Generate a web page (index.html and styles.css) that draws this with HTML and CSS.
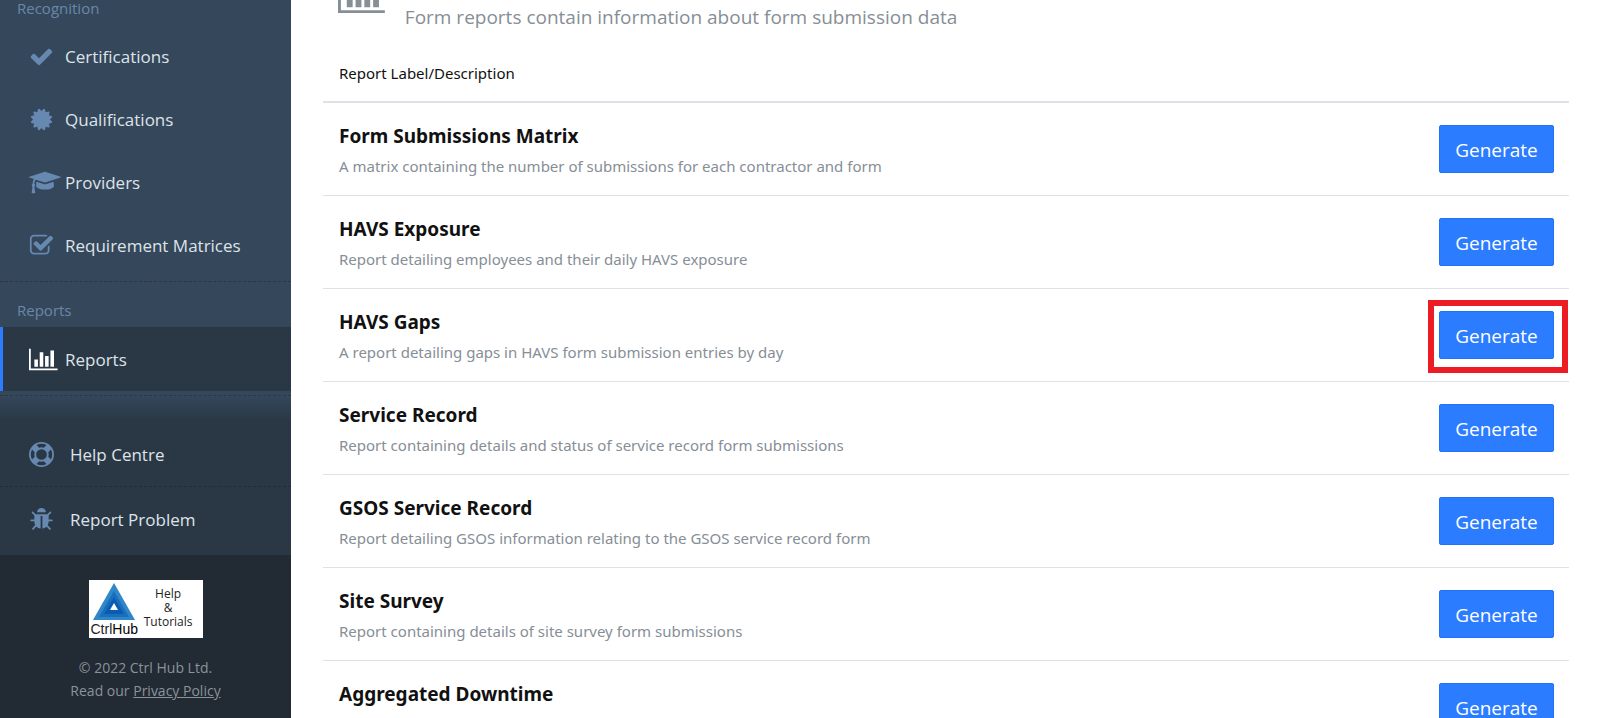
FILE: index.html
```
<!DOCTYPE html>
<html lang="en">
<head>
  <meta charset="UTF-8">
  <meta name="viewport" content="width=device-width, initial-scale=1.0">
  <title>Form Reports - Ctrl Hub</title>
  <link rel="stylesheet" href="styles.css">
</head>
<body>
  <div class="app">
    <aside class="sidebar">
      <nav class="menu">
        <div class="menu-title">Recognition</div>
        <a class="menu-item" href="#">
          <svg class="icon" viewBox="0 0 1792 1792" preserveAspectRatio="xMinYMid"><path d="M1671 566q0 40-28 68l-724 724-136 136q-28 28-68 28t-68-28l-136-136-362-362q-28-28-28-68t28-68l136-136q28-28 68-28t68 28l294 295 656-657q28-28 68-28t68 28l136 136q28 28 28 68z"/></svg>
          <span>Certifications</span>
        </a>
        <a class="menu-item" href="#">
          <svg class="icon" viewBox="0 0 1792 1792" preserveAspectRatio="xMinYMid"><path d="M1504 896l138 135q30 28 20 70-12 41-52 51l-188 48 53 186q12 41-19 70-29 31-70 19l-186-53-48 188q-10 40-51 52-12 2-19 2-31 0-51-22l-135-138-135 138q-28 30-70 20-41-11-51-52l-48-188-186 53q-41 12-70-19-31-29-19-70l53-186-188-48q-40-10-52-51-10-42 20-70l138-135-138-135q-30-28-20-70 12-41 52-51l188-48-53-186q-12-41 19-70 29-31 70-19l186 53 48-188q10-41 51-51 41-12 70 19l135 139 135-139q29-30 70-19 41 10 51 51l48 188 186-53q41-12 70 19 31 29 19 70l-53 186 188 48q40 10 52 51 10 42-20 70z"/></svg>
          <span>Qualifications</span>
        </a>
        <a class="menu-item" href="#">
          <svg class="icon" viewBox="0 0 2304 1792" preserveAspectRatio="xMinYMid"><path d="M1774 836l18 316q4 69-82 128t-235 93.5-323 34.5-323-34.5-235-93.5-82-128l18-316 574 181q22 7 48 7t48-7zm530-324q0 23-22 31l-1120 352q-4 1-10 1t-10-1l-652-206q-43 34-71 111.5t-34 178.5q63 36 63 109 0 69-58 107l58 433q2 14-8 25-9 11-24 11h-192q-15 0-24-11-10-11-8-25l58-433q-58-38-58-107 0-73 65-111 11-207 98-330l-333-104q-22-8-22-31t22-31l1120-352q4-1 10-1t10 1l1120 352q22 8 22 31z"/></svg>
          <span>Providers</span>
        </a>
        <a class="menu-item" href="#">
          <svg class="icon" viewBox="0 0 1792 1792" preserveAspectRatio="xMinYMid"><path d="M1472 930v318q0 119-84.5 203.5t-203.5 84.5h-832q-119 0-203.5-84.5t-84.5-203.5v-832q0-119 84.5-203.5t203.5-84.5h832q63 0 117 25 15 7 18 23 3 17-9 29l-49 49q-10 10-23 10-3 0-9-2-23-6-45-6h-832q-66 0-113 47t-47 113v832q0 66 47 113t113 47h832q66 0 113-47t47-113v-254q0-13 9-22l64-64q10-10 23-10 6 0 12 3 20 8 20 29zm231-489l-814 814q-24 24-57 24t-57-24l-430-430q-24-24-24-57t24-57l110-110q24-24 57-24t57 24l263 263 647-647q24-24 57-24t57 24l110 110q24 24 24 57t-24 57z"/></svg>
          <span>Requirement Matrices</span>
        </a>
      </nav>

      <nav class="menu">
        <div class="menu-title">Reports</div>
        <a class="menu-item active" href="#">
          <svg class="icon" viewBox="0 0 2048 1792" preserveAspectRatio="xMinYMid"><path d="M640 896v512h-256v-512h256zm384-512v1024h-256v-1024h256zm1024 1152v128h-2048v-1536h128v1408h1920zm-640-896v768h-256v-768h256zm384-384v1152h-256v-1152h256z"/></svg>
          <span>Reports</span>
        </a>
      </nav>

      <div class="support">
        <a class="support-item" href="#">
          <svg class="icon" viewBox="0 0 1792 1792">
            <path fill-rule="evenodd" d="M896 0a896 896 0 1 0 0 1792a896 896 0 1 0 0-1792zM896 128q190 0 361 90l-194 194q-82-28-167-28t-167 28l-194-194q171-90 361-90zM218 1257q-90-171-90-361t90-361l194 194q-28 82-28 167t28 167zM896 1664q-190 0-361-90l194-194q82 28 167 28t167-28l194 194q-171 90-361 90zM896 512a384 384 0 1 0 0 768a384 384 0 1 0 0-768zM1380 1063q28-82 28-167t-28-167l194-194q90 171 90 361t-90 361z"/>
          </svg>
          <span>Help Centre</span>
        </a>
        <a class="support-item" href="#">
          <svg class="icon" viewBox="0 0 1792 1792"><path d="M1696 960q0 26-19 45t-45 19h-224q0 171-67 290l208 209q19 19 19 45t-19 45q-18 19-45 19t-45-19l-198-197q-5 5-15 13t-42 28.5-65 36.5-82 29-97 13v-896h-128v896q-51 0-101.5-13.5t-87-33-66-39-43.5-32.5l-15-14-183 207q-20 21-48 21-24 0-43-16-19-18-20.5-44.5t15.5-46.5l202-227q-58-114-58-274h-224q-26 0-45-19t-19-45 19-45 45-19h224v-294l-173-173q-19-19-19-45t19-45 45-19 45 19l173 173h844l173-173q19-19 45-19t45 19 19 45-19 45l-173 173v294h224q26 0 45 19t19 45zm-480-576h-640q0-133 93.5-226.5t226.5-93.5 226.5 93.5 93.5 226.5z"/></svg>
          <span>Report Problem</span>
        </a>
      </div>

      <footer class="footer">
        <a class="tutorials" href="#">
          <span class="brand">
            <svg class="brand-mark" viewBox="0 0 42 37">
              <path fill="#2f86c8" d="M21 0L42 37H0z"/>
              <path fill="#1a6fbd" d="M21 8L36 34H6z"/>
              <path fill="#0a5cb0" d="M21 14L31 31H11z"/>
              <path fill="#fff" d="M21 20L25 27H17z"/>
            </svg>
            <span>Ctrl<b>Hub</b></span>
          </span>
          <span class="tutorials-text">Help<br>&amp;<br>Tutorials</span>
        </a>
        <p>© 2022 Ctrl Hub Ltd.<br>Read our <a href="#">Privacy Policy</a></p>
      </footer>
    </aside>

    <main class="content">
      <header class="page-header">
        <svg class="page-icon" viewBox="0 0 2048 1792"><path d="M640 896v512h-256v-512h256zm384-512v1024h-256v-1024h256zm1024 1152v128h-2048v-1536h128v1408h1920zm-640-896v768h-256v-768h256zm384-384v1152h-256v-1152h256z"/></svg>
        <p>Form reports contain information about form submission data</p>
      </header>

      <table class="reports">
        <thead>
          <tr><th colspan="2">Report Label/Description</th></tr>
        </thead>
        <tbody>
          <tr>
            <td><h2>Form Submissions Matrix</h2><p>A matrix containing the number of submissions for each contractor and form</p></td>
            <td class="action"><button class="btn" type="button">Generate</button></td>
          </tr>
          <tr>
            <td><h2>HAVS Exposure</h2><p>Report detailing employees and their daily HAVS exposure</p></td>
            <td class="action"><button class="btn" type="button">Generate</button></td>
          </tr>
          <tr>
            <td><h2>HAVS Gaps</h2><p>A report detailing gaps in HAVS form submission entries by day</p></td>
            <td class="action"><button class="btn highlight" type="button">Generate</button></td>
          </tr>
          <tr>
            <td><h2>Service Record</h2><p>Report containing details and status of service record form submissions</p></td>
            <td class="action"><button class="btn" type="button">Generate</button></td>
          </tr>
          <tr>
            <td><h2>GSOS Service Record</h2><p>Report detailing GSOS information relating to the GSOS service record form</p></td>
            <td class="action"><button class="btn" type="button">Generate</button></td>
          </tr>
          <tr>
            <td><h2>Site Survey</h2><p>Report containing details of site survey form submissions</p></td>
            <td class="action"><button class="btn" type="button">Generate</button></td>
          </tr>
          <tr>
            <td><h2>Aggregated Downtime</h2><p>Report detailing monthly aggregated downtime</p></td>
            <td class="action"><button class="btn" type="button">Generate</button></td>
          </tr>
        </tbody>
      </table>
    </main>
  </div>
</body>
</html>
```

FILE: styles.css
```
* {
  box-sizing: border-box;
}

body {
  margin: 0;
  height: 100vh;
  overflow: hidden;
  font-family: "Segoe UI", "Open Sans", "Noto Sans", sans-serif;
  font-size: 15px;
  background: #fff;
  color: #111;
}

h2, p {
  margin: 0;
}

.app {
  display: flex;
  height: 100%;
}

/* Sidebar */
.sidebar {
  display: flex;
  flex-direction: column;
  flex: 0 0 291px;
  background: #34475b;
}

.menu {
  padding-bottom: 4px;
  border-bottom: 1px dashed #2a3846;
}

.menu-title {
  padding: 0 17px 9px;
  line-height: 16px;
  color: #6b87a8;
}

.menu + .menu .menu-title {
  padding-top: 20px;
}

.menu-item,
.support-item {
  display: flex;
  align-items: center;
  height: 63px;
  padding-left: 29px;
  font-size: 17px;
  color: #dfe3e8;
  text-decoration: none;
}

.icon {
  height: 25px;
  fill: #6788b0;
}

.menu-item .icon {
  width: 32px;
  margin-right: 4px;
}

.menu-item.active {
  height: 64px;
  padding-left: 26px;
  border-left: 3px solid #2b7cff;
  background: #2a3846;
}

.active .icon {
  fill: #fff;
}

.support {
  padding: 27px 0 3px;
  background: linear-gradient(#34475b, #2a3846 24px);
}

.support-item {
  gap: 16px;
}

.support-item + .support-item {
  height: 66px;
  border-top: 1px dashed #222d38;
}

.footer {
  flex: 1;
  padding-top: 25px;
  background: #222a33;
  text-align: center;
  font-size: 14px;
  line-height: 23px;
  color: #8a939b;
}

.footer p a {
  color: inherit;
}

.tutorials {
  display: flex;
  justify-content: space-between;
  width: 114px;
  height: 58px;
  margin: 0 auto 18px;
  padding: 3px 10px 0 2px;
  background: #fff;
  font-size: 12px;
  line-height: 14px;
  color: #222;
  text-decoration: none;
}

.brand {
  display: flex;
  flex-direction: column;
  align-items: center;
  font-family: "Liberation Sans", Arial, sans-serif;
  font-size: 14px;
  line-height: 18px;
}

.brand b {
  font-weight: normal;
  color: #000;
}

.brand-mark {
  width: 42px;
  height: 37px;
}

.tutorials-text {
  padding-top: 4px;
}

/* Content */
.content {
  flex: 1;
  padding: 0 31px 0 32px;
}

.page-header {
  display: flex;
  align-items: flex-end;
  gap: 20px;
  height: 32px;
  padding-left: 15px;
  font-size: 19px;
  line-height: 30px;
  color: #868e96;
}

.page-icon {
  height: 41px;
  margin-bottom: 16px;
  fill: #868e96;
}

.reports {
  width: 100%;
  border-collapse: collapse;
  font-family: "Segoe UI", "Noto Sans", "Open Sans", sans-serif;
}

.reports th {
  height: 70px;
  padding: 29px 16px 0;
  border-bottom: 2px solid #dee2e6;
  font-weight: normal;
  line-height: 24px;
  text-align: left;
  vertical-align: top;
}

.reports td {
  height: 93px;
  padding: 2px 16px 0;
  border-bottom: 1px solid #dee2e6;
  color: #868e96;
}

.reports h2 {
  margin-bottom: 2px;
  font-size: 19px;
  font-weight: 700;
  line-height: 30px;
  color: #111;
}

.reports p {
  line-height: 26px;
}

.reports .action {
  width: 146px;
  padding: 0 15px 0 16px;
}

.btn {
  position: relative;
  display: block;
  width: 115px;
  height: 48px;
  padding: 2px 0 0;
  border: 1px solid #1f73fb;
  border-radius: 2px;
  background: #2b7cff;
  font-family: "Segoe UI", "Open Sans", "Noto Sans", sans-serif;
  font-size: 19px;
  color: #fff;
  cursor: pointer;
}

/* frame around the report being pointed out */
.btn.highlight::after {
  content: "";
  position: absolute;
  inset: -12px -15px -15px -12px;
  border: 6px solid #ed1c24;
}
```
